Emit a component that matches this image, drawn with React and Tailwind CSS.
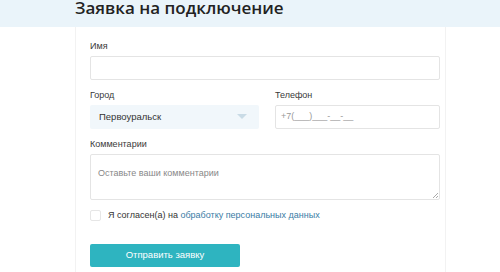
export default function App() {
  return (
    <div className="w-[500px] h-[272px] overflow-hidden bg-white" style={{ fontFamily: '"Liberation Sans", Arial, sans-serif' }}>
      <div className="h-[27px] bg-[#eaf4fa] pl-[75px] overflow-hidden">
        <h1 className="-mt-[3px] text-[17px] leading-[21px] font-semibold text-[#222]" style={{ fontFamily: '"Open Sans", sans-serif' }}>
          Заявка на подключение
        </h1>
      </div>
      <div className="ml-[75px] w-[371px] h-[245px] border-x border-[#f2f2f2] pl-[14px] pr-[5px] pt-[13px]">
        <label className="block text-[9px] leading-[12px] text-[#3a3a3a]">Имя</label>
        <input className="mt-[4px] block w-full h-[24px] border border-[#e4e4e4] rounded-[2px] bg-white outline-none" />

        <div className="mt-[9px] flex gap-[16px]">
          <div className="w-[169px]">
            <label className="block text-[9px] leading-[12px] text-[#3a3a3a]">Город</label>
            <div className="mt-[4px] h-[24px] rounded-[2px] bg-[#f1f7fb] flex items-center justify-between pl-[9px] pr-[12px]">
              <span className="text-[9.5px] text-[#333]">Первоуральск</span>
              <svg width="10" height="6" viewBox="0 0 10 6">
                <path d="M0 0 L10 0 L5 5 Z" fill="#c9dbe6" />
              </svg>
            </div>
          </div>
          <div className="flex-1">
            <label className="block text-[9px] leading-[12px] text-[#3a3a3a]">Телефон</label>
            <div className="mt-[4px] h-[24px] border border-[#e4e4e4] rounded-[2px] flex items-center pl-[5px]">
              <span className="text-[9px] text-[#999]">+7(___)___-__-__</span>
            </div>
          </div>
        </div>

        <label className="mt-[9px] block text-[9px] leading-[12px] text-[#3a3a3a]">Комментарии</label>
        <div className="relative mt-[4px] h-[46px] border border-[#e4e4e4] rounded-[2px] pl-[7px] pt-[4px]">
          <span className="text-[9px] text-[#888]">Оставьте ваши комментарии</span>
          <svg className="absolute right-[1px] bottom-[1px]" width="6" height="6" viewBox="0 0 6 6">
            <path d="M6 1 L1 6 M6 4 L4 6" stroke="#aaa" strokeWidth="1" />
          </svg>
        </div>

        <div className="mt-[9px] flex items-center gap-[7px]">
          <div className="w-[11px] h-[11px] border border-[#e6e6e6] rounded-[2px] bg-white" />
          <span className="text-[9px] text-[#333]">
            Я согласен(а) на <span className="text-[#3a7ca5]">обработку персональных данных</span>
          </span>
        </div>

        <button className="mt-[21px] w-[150px] h-[23px] rounded-[2px] bg-[#2eb4c0] text-white text-[9.5px]">
          Отправить заявку
        </button>
      </div>
    </div>
  );
}
